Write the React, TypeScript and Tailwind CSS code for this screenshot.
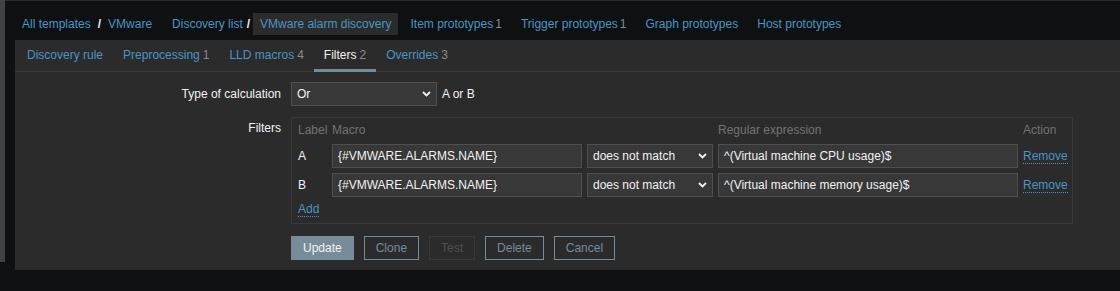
import { ReactNode } from 'react'

const crumbs = [
  { label: 'Item prototypes', count: 1 },
  { label: 'Trigger prototypes', count: 1 },
  { label: 'Graph prototypes' },
  { label: 'Host prototypes' },
]

const tabs = [
  { label: 'Discovery rule' },
  { label: 'Preprocessing', count: 1 },
  { label: 'LLD macros', count: 4 },
  { label: 'Filters', count: 2, active: true },
  { label: 'Overrides', count: 3 },
]

const filters = [
  { label: 'A', macro: '{#VMWARE.ALARMS.NAME}', op: 'does not match', regex: '^(Virtual machine CPU usage)$' },
  { label: 'B', macro: '{#VMWARE.ALARMS.NAME}', op: 'does not match', regex: '^(Virtual machine memory usage)$' },
]

function Chevron() {
  return (
    <svg width="9" height="6" viewBox="0 0 9 6" className="shrink-0">
      <path d="M1 1l3.5 3.5L8 1" fill="none" stroke="#f2f2f2" strokeWidth="1.8" />
    </svg>
  )
}

function Select({ value, className = '' }: { value: string; className?: string }) {
  return (
    <div className={`flex items-center justify-between h-[24px] bg-[#383838] border border-[#4f4f4f] pl-[5px] pr-[5px] ${className}`}>
      <span>{value}</span>
      <Chevron />
    </div>
  )
}

function Input({ children }: { children: ReactNode }) {
  return (
    <div className="flex items-center h-[24px] bg-[#383838] border border-[#4f4f4f] pl-[5px] whitespace-nowrap overflow-hidden">
      {children}
    </div>
  )
}

function DottedLink({ children }: { children: ReactNode }) {
  return <span className="text-[#4796c4] border-b border-dotted border-[#4796c4] leading-[14px]">{children}</span>
}

export default function App() {
  return (
    <div className="h-[291px] w-full bg-[#0e1012] flex items-start font-['Liberation_Sans',Arial,sans-serif] text-[12px] leading-[14px] text-[#f2f2f2]">
      <div className="w-[5px] h-[262px] bg-[#424242] shrink-0" />

      <div className="flex-1 pl-[10px] border-t border-[#2b2b2b]">
        {/* Breadcrumbs */}
        <nav className="flex items-center gap-[5px] h-[39px] pt-[12px] pb-[5px] text-[#4796c4] whitespace-nowrap">
          <div className="flex items-center h-[22px] px-[7px]">
            <span>All templates</span>
            <span className="mx-[7px] font-bold text-[#f2f2f2]">/</span>
            <span>VMware</span>
          </div>
          <div className="flex items-center h-[22px] pl-[8px]">
            <span>Discovery list</span>
            <span className="ml-[4px] mr-[3px] font-bold text-[#f2f2f2]">/</span>
            <span className="flex items-center h-[22px] px-[7px] bg-[#2b2b2b]">VMware alarm discovery</span>
          </div>
          {crumbs.map((c) => (
            <div key={c.label} className="flex items-center h-[22px] px-[7px]">
              <span>{c.label}</span>
              {c.count !== undefined && <span className="ml-[2px] text-[#8a8a8a]">{c.count}</span>}
            </div>
          ))}
        </nav>

        {/* Card */}
        <div className="bg-[#2b2b2b] pb-[10px]">
          <div className="flex h-[32px] pl-[2px] border-b border-[#383838] whitespace-nowrap">
            {tabs.map((t) => (
              <div
                key={t.label}
                className={`flex items-start px-[10px] pt-[8px] h-[32px] ${
                  t.active ? 'border-b-[3px] border-[#768d99] text-[#f2f2f2]' : 'text-[#4796c4]'
                }`}
              >
                <span>{t.label}</span>
                {t.count !== undefined && <span className="ml-[3px] text-[#8a8a8a]">{t.count}</span>}
              </div>
            ))}
          </div>

          <div className="pt-[10px]">
            <div className="flex items-center">
              <div className="w-[266px] mr-[10px] text-right">Type of calculation</div>
              <Select value="Or" className="w-[146px]" />
              <span className="ml-[5px]">A or B</span>
            </div>

            <div className="flex items-start mt-[11px]">
              <div className="w-[266px] mr-[10px] text-right pt-[4px]">Filters</div>
              <div className="w-[782px] border border-[#383838] pt-[3px] pb-[6px] pl-[6px]">
                <div className="grid grid-cols-[29px_250px_126px_300px_auto] gap-x-[5px] gap-y-[5px] items-center">
                  <div className="h-[18px] flex items-center text-[#737373]">Label</div>
                  <div className="h-[18px] flex items-center text-[#737373]">Macro</div>
                  <div />
                  <div className="h-[18px] flex items-center text-[#737373]">Regular expression</div>
                  <div className="h-[18px] flex items-center text-[#737373]">Action</div>

                  {filters.map((f) => (
                    <div key={f.label} className="contents">
                      <div>{f.label}</div>
                      <Input>{f.macro}</Input>
                      <Select value={f.op} />
                      <Input>{f.regex}</Input>
                      <div className="flex items-center">
                        <DottedLink>Remove</DottedLink>
                      </div>
                    </div>
                  ))}

                  <div className="col-span-5 flex">
                    <DottedLink>Add</DottedLink>
                  </div>
                </div>
              </div>
            </div>

            <div className="flex gap-[10px] ml-[276px] mt-[12px]">
              <button className="h-[24px] px-[11px] border border-[#768d99] bg-[#768d99] text-[#f2f2f2]">Update</button>
              <button className="h-[24px] px-[11px] border border-[#768d99] text-[#768d99]">Clone</button>
              <button className="h-[24px] px-[11px] border border-[#383838] text-[#4f4f4f]">Test</button>
              <button className="h-[24px] px-[11px] border border-[#768d99] text-[#768d99]">Delete</button>
              <button className="h-[24px] px-[11px] border border-[#768d99] text-[#768d99]">Cancel</button>
            </div>
          </div>
        </div>
      </div>
    </div>
  )
}
